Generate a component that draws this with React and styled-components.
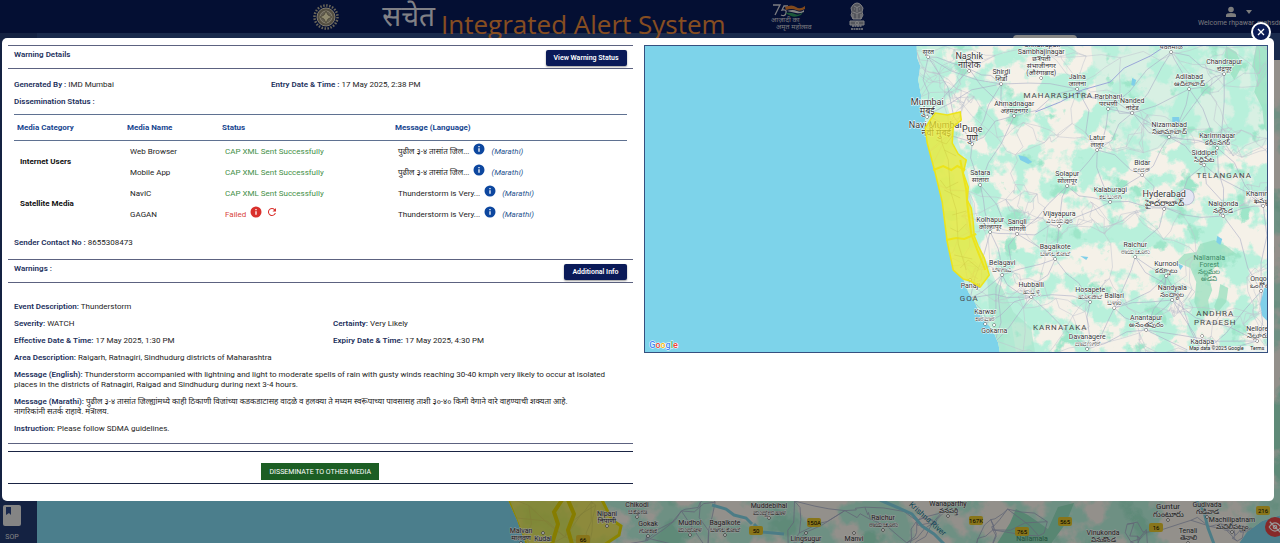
import React from 'react';
import styled, { createGlobalStyle } from 'styled-components';

const warning = {
    generatedBy: 'IMD Mumbai',
    entryTime: '17 May 2025, 2:38 PM',
    contact: '8655308473',
    event: 'Thunderstorm',
    severity: 'WATCH',
    certainty: 'Very Likely',
    effective: '17 May 2025, 1:30 PM',
    expiry: '17 May 2025, 4:30 PM',
    area: 'Raigarh, Ratnagiri, Sindhudurg districts of Maharashtra',
    english: 'Thunderstorm accompanied with lightning and light to moderate spells of rain with gusty winds reaching 30-40 kmph very likely to occur at isolated places in the districts of Ratnagiri, Raigad and Sindhudurg during next 3-4 hours.',
    marathi: 'पुढील ३-४ तासांत जिल्ह्यांमध्ये काही ठिकाणी विजांच्या कडकडाटासह वादळे व हलक्या ते मध्यम स्वरूपाच्या पावसासह ताशी ३०-४० किमी वेगाने वारे वाहण्याची शक्यता आहे.\nनागरिकांनी सतर्क राहावे. मंत्रालय.',
    instruction: 'Please follow SDMA guidelines.',
}

const mediaRows = [
    { category: 'Internet Users', name: 'Web Browser', sent: true, message: 'पुढील ३-४ तासांत जिल...' },
    { name: 'Mobile App', sent: true, message: 'पुढील ३-४ तासांत जिल...' },
    { category: 'Satellite Media', name: 'NavIC', sent: true, message: 'Thunderstorm is Very...' },
    { name: 'GAGAN', sent: false, message: 'Thunderstorm is Very...' },
]

// x, y, name, native name, size
const towns = [
    [928, 47, '', 'सूरत', 7], [969, 59, 'Nashik', 'नाशिक', 9], [1001, 74, 'Shirdi', 'शिर्डी', 7],
    [1077, 79, 'Jalna', 'जालना', 7], [1108, 99, 'Parbhani', 'परभणी', 7], [1132, 103, 'Nanded', 'नांदेड', 7],
    [1189, 79, 'Adilabad', 'ఆదిలాబాద్', 7], [1224, 64, 'Chandrapur', 'चंद्रपूर', 7], [1171, 42, '', 'यवतमाळ', 7],
    [927, 105, 'Mumbai', 'मुंबई', 9], [1014, 106, 'Ahmadnagar', 'अहमदनगर', 7], [972, 132, 'Pune', 'पुणे', 9],
    [1169, 127, 'Nizamabad', 'నిజామాబాద్', 7], [1217, 138, 'Karimnagar', 'కరీంనగర్', 7], [1097, 140, 'Latur', 'लातूर', 7],
    [1204, 155, 'Siddipet', 'సిద్దిపేట', 7], [1142, 165, 'Bidar', 'ಬೀದರ್', 7], [980, 175, 'Satara', 'सातारा', 7],
    [1067, 176, 'Solapur', 'सोलापूर', 7], [1110, 192, 'Kalaburagi', 'ಕಲಬುರಗಿ', 7], [1164, 197, 'Hyderabad', 'హైదరాబాద్', 9],
    [1263, 196, 'Khammam', 'ఖమ్మం', 7], [990, 222, 'Kolhapur', 'कोल्हापूर', 7], [1017, 224, 'Sangli', 'सांगली', 7],
    [1059, 216, 'Vijayapura', 'ವಿಜಯಪುರ', 7], [1055, 249, 'Bagalkote', 'ಬಾಗಲಕೋಟೆ', 7], [1223, 206, 'Nalgonda', 'నల్గొండ', 7],
    [1002, 265, 'Belagavi', 'ಬೆಳಗಾವಿ', 7], [1135, 247, 'Raichur', 'ರಾಯಚೂರು', 7], [1166, 266, 'Kurnool', 'కర్నూలు', 7],
    [1031, 287, 'Hubballi', 'ಹುಬ್ಬಳ್ಳಿ', 7], [1172, 290, 'Nandyala', 'నంద్యాల', 7], [1261, 281, 'Ongole', 'ఒంగోలు', 7],
    [1090, 292, 'Hosapete', 'ಹೊಸಪೇಟೆ', 7], [1114, 298, 'Ballari', 'ಬಳ್ಳಾರಿ', 7], [970, 288, 'Panaji', '', 7],
    [985, 314, 'Karwar', 'ಕಾರವಾರ', 7], [994, 333, 'Gokarna', '', 7], [1146, 320, 'Anantapur', 'అనంతపురం', 7],
    [1087, 339, 'Davanagere', 'ದಾವಣಗೆರೆ', 7], [1257, 331, 'Nellore', 'నెల్లూరు', 7], [1202, 344, 'Kadapa', '', 7],
]

const backTowns = [
    [637, 507, 'Chikodi', 'ಚಿಕ್ಕೋಡಿ', 7], [648, 526, 'Gokak', 'ಗೋಕಾಕ', 7], [690, 525, 'Mudhol', 'ಮುಧೋಳ', 7],
    [725, 525, 'Bagalkote', 'ಬಾಗಲಕೋಟೆ', 7], [769, 508, 'Muddebihal', 'ಮುದ್ದೇಬಿಹಾಳ', 7], [806, 541, 'Lingsugur', '', 7],
    [854, 541, 'Manvi', '', 7], [883, 520, 'Raichur', 'ರಾಯಚೂರು', 7], [948, 506, 'Wanaparthy', 'వనపర్తి', 7],
    [1103, 535, 'Vinukonda', 'వినుకొండ', 7], [1168, 509, 'Guntur', 'గుంటూరు', 8], [1207, 507, 'Gudivada', 'గుడివాడ', 7],
    [1188, 533, 'Tenali', 'తెనాలి', 7], [1232, 522, 'Machilipatnam', 'మచిలీపట్నం', 7], [607, 516, 'Nipani', 'निपाणी', 7],
    [521, 533, 'Malvan', 'मालवण', 7], [543, 541, 'Kudal', '', 7],
]

const states = [
    [1058, 98, 'MAHARASHTRA'], [1224, 178, 'TELANGANA'], [969, 301, 'GOA'],
    [1060, 330, 'KARNATAKA'], [1215, 316, 'ANDHRA'], [1215, 325, 'PRADESH'],
]

const shields = [
    [756, 531, '50'], [814, 523, '150A'], [976, 521, '167K'], [1022, 532, '765'],
    [1065, 522, '565'], [1156, 528, '16'], [1263, 511, '216'], [583, 540, '66'],
]

const seeded = (seed) => () => {
    seed = (seed * 16807) % 2147483647
    return seed / 2147483647
}

// joins every town to its closest neighbours with a slightly bent road
const makeRoads = (points, links, seed) => {
    const rand = seeded(seed)
    const bend = () => (rand() - 0.5) * 10
    const joined = new Set()
    return points.flatMap(([x, y]) =>
        points
            .filter((p) => p[0] !== x || p[1] !== y)
            .sort((a, b) => Math.hypot(a[0] - x, a[1] - y) - Math.hypot(b[0] - x, b[1] - y))
            .slice(0, links)
            .filter(([tx, ty]) => {
                const key = [x + y, tx + ty].sort().join()
                return !joined.has(key) && joined.add(key)
            })
            .map(([tx, ty]) => {
                const dx = (tx - x) / 3
                const dy = (ty - y) / 3
                return `M${x} ${y + 10}L${x + dx + bend()} ${y + 10 + dy + bend()}L${x + dx * 2 + bend()} ${y + 10 + dy * 2 + bend()}L${tx} ${ty + 10}`
            })
    ).join('')
}

const scatter = (x, y, width, height, count, seed) => {
    const rand = seeded(seed)
    return Array.from({ length: count }, () => [x + rand() * width, y + rand() * height])
}

const mainRoads = makeRoads(towns, 4, 77)
const minorRoads = makeRoads(scatter(900, 30, 380, 330, 150, 41), 4, 19)
const backRoads = makeRoads(scatter(500, 490, 790, 60, 45, 23), 3, 31)

const coast = 'M916 40L917 58L920 66L918 80L921 96L920 106L925 118L925 128L928 146L935 173L942 202L947 242L953 270L963 279L968 292L975 303L981 318L992 329L998 343L1001 360H1290V30H916Z'
const alertArea = 'M935 113L947 115L960 112L961 120L953 127L952 143L958 154L966 160L963 173L968 187L967 200L971 208L973 222L974 236L978 246L984 258L989 275L980 287L970 281L963 279L953 270L947 242L942 202L935 173L927 143L925 128L930 120Z'

const Terrain = ({ id, scale }) => (
    <defs>
        <filter id={`${id}-green`} x="0" y="0" width="1" height="1" colorInterpolationFilters="sRGB">
            <feTurbulence type="fractalNoise" baseFrequency={scale} numOctaves="5" seed="8" />
            <feColorMatrix values="0 0 0 0 0.72  0 0 0 0 0.94  0 0 0 0 0.86  9 0 0 0 -4.100" />
        </filter>
        <filter id={`${id}-forest`} x="0" y="0" width="1" height="1" colorInterpolationFilters="sRGB">
            <feTurbulence type="fractalNoise" baseFrequency={scale} numOctaves="5" seed="15" />
            <feColorMatrix values="0 0 0 0 0.62  0 0 0 0 0.9  0 0 0 0 0.79  0 10 0 0 -6.600" />
        </filter>
    </defs>
)

const TownLabel = ({ town: [x, y, name, native, size] }) => (
    <Town $size={size}>
        <circle cx={x} cy={native ? y + size + 3 : y - 8} r="1.3" />
        <text x={x} y={y}>{name}</text>
        <text x={x} y={y + size}>{native}</text>
    </Town>
)

const AlertMap = () => (
    <MapFrame>
        <MapSvg viewBox="644 46 624 306" preserveAspectRatio="xMidYMid slice" role="img" aria-label="Warning area map">
            <Terrain id="front" scale="0.04" />
            <clipPath id="front-land"><path d={coast} /></clipPath>
            <g clipPath="url(#front-land)">
                <rect x="900" y="40" width="380" height="320" fill="#f5f1e8" />
                <path d="M1090 40h190v100l-30 10-60-14-50 20-40-30z" fill="#c4f0e0" opacity="0.6" />
                <rect x="900" y="40" width="380" height="320" filter="url(#front-green)" />
                <rect x="900" y="40" width="380" height="320" filter="url(#front-forest)" />
                <path d="M915 40h26l4 60 22 70 14 80 28 60 8 50h-40l-60-150z" fill="#b8efdc" opacity="0.7" />
                <path d="M987 278l14 8 12 26 18 16 4 26h-36l-10-40z" fill="#a8e6cd" opacity="0.7" />
                <path d="M1176 262l8-8 12-2 4-8 14-4 12 6 10 8-14 4-8 10-6 8 4 14-4 10 2 14-10 2-6-14 2-20-6-14zM1220 284l8 4-2 14-10 12-2-8 4-10z" fill="#98dfbf" opacity="0.75" />
                <path d="M1256 46h14v90l-6-8-2-20-8-16 4-14-6-12z M1226 46l10 6 6 14-8 14-6-10-4-14z" fill="#98e2c2" opacity="0.8" />
                <path d={minorRoads} fill="none" stroke="#bec2ce" strokeWidth="0.5" />
                <path d={mainRoads} fill="none" stroke="#a9adc6" strokeWidth="0.6" />
                <path d="M1035 112L1060 102L1082 90L1110 82L1124 68L1150 56L1168 44" fill="none" stroke="#9aa6d8" strokeWidth="1" />
                <path d="M1018 155l8 2 6 5-4 2-8-4zM1172 117h7v5h-7zM1132 78l4 2-2 6-3-1zM1177 263l6 3-3 4zM1217 236l5 3-2 6-4-3zM1080 256l8 1-2 3zM1264 288l-4 16 2 12 8 8v-40z" fill="#7fcfe9" />
                <circle cx="1186" cy="197" r="8" fill="#e4e6f3" stroke="#a3a9c4" strokeWidth="0.7" />
            </g>
            {towns.map((town) => <TownLabel key={town[0]} town={town} />)}
            <Town $size={7}>
                <text x="1042" y="47">Chhatrapati</text>
                <text x="1041" y="54">Sambhajinagar</text>
                <text x="1041" y="61">छत्रपती</text>
                <text x="1041" y="68">संभाजीनगर</text>
                <text x="1041" y="75">(औरंगाबाद)</text>
                <circle cx="1041" cy="78" r="1.3" />
            </Town>
            <Town $size={9}>
                <text x="935" y="128">Navi Mumbai</text>
                <text x="936" y="136">नवी मुंबई</text>
            </Town>
            <path d={alertArea} fill="#efe92a" fillOpacity="0.72" stroke="#ece41a" strokeWidth="1.500" />
            <path d="M933 170l10-4 8 4 6-4 8 4M946 240l10-2 8 1 12-5M960 160l2 10 4 20 1 14 4 30 6 16 8 20" fill="none" stroke="#ece41a" strokeWidth="2" />
            <path d="M938 124l4 20 6 16 2 30 6 20 2 34 8 26M944 150l12 6M944 190l16 8M952 215l14-4M954 255l18 4M936 140l10 4 6-8M950 228l8 4 8-8M940 180l6 8 12-6M960 268l8-8 10 8" fill="none" stroke="#cfcc45" strokeWidth="0.500" />
            {states.map(([x, y, name]) => <StateName key={name} x={x} y={y}>{name}</StateName>)}
            <Forest>
                <text x="1209" y="260">Nallamala</text>
                <text x="1209" y="267">Forest</text>
                <text x="1209" y="274">నల్లమల</text>
                <text x="1209" y="281">అడవి</text>
            </Forest>
            <rect x="1187" y="346" width="81" height="6" fill="#f5f5f5" opacity="0.8" />
            <Credit x="1189" y="350">Map data ©2025 Google</Credit>
            <Credit x="1250" y="350">Terms</Credit>
            <GoogleMark x="649" y="348">
                <tspan fill="#4285f4">G</tspan><tspan fill="#ea4335">o</tspan><tspan fill="#fbbc04">o</tspan><tspan fill="#4285f4">g</tspan><tspan fill="#34a853">l</tspan><tspan fill="#ea4335">e</tspan>
            </GoogleMark>
        </MapSvg>
    </MapFrame>
)

const BackMap = () => (
    <MapSvg viewBox="37 60 1243 483" preserveAspectRatio="xMidYMax slice" aria-hidden="true">
        <Terrain id="back" scale="0.02" />
        <clipPath id="back-land"><path d="M490 440L508 500L517 520L526 545H1238L1247 532L1262 521L1290 512V60H490Z" /></clipPath>
        <g clipPath="url(#back-land)">
            <rect x="490" y="60" width="800" height="490" fill="#f5f1e8" />
            <rect x="490" y="60" width="800" height="490" filter="url(#back-green)" />
            <rect x="490" y="60" width="800" height="490" filter="url(#back-forest)" />
            <path d="M996 545l14-22 6-14 12 6 20 14 10-22 16-4-8 20-16 22z" fill="#93dfbe" />
            <path d={backRoads} fill="none" stroke="#a3a9c4" strokeWidth="0.8" />
            <path d="M712 505l14 4 8 6 12 3 6 6M754 524l8 8 22 2M880 500l14 6 18 8 10 12 12 8 12 12M1196 500l8 12 4 16 6 16" fill="none" stroke="#7fcfe0" strokeWidth="3" />
            <path d="M490 440L508 500L526 545H604L619 535L621 526L612 520L602 500V440Z" fill="#e8e13a" fillOpacity="0.75" stroke="#e8dc00" strokeWidth="3" />
            <path d="M562 500l-8 12 4 12-6 20M568 500l6 14-6 16 4 14" fill="none" stroke="#e0d000" strokeWidth="4" />
        </g>
        {backTowns.map((town) => <TownLabel key={town[0]} town={town} />)}
        {shields.map(([x, y, name]) => (
            <Shield key={name}>
                <rect x={x - 7} y={y - 5} width="14" height="9" rx="2" />
                <text x={x} y={y + 2}>{name}</text>
            </Shield>
        ))}
        <RiverName x="922" y="527" transform="rotate(42 932 529)">Krishna River</RiverName>
        <Forest><text x="1032" y="541">Nallamala</text></Forest>
    </MapSvg>
)

const InfoIcon = () => (
    <svg width="12" height="12" viewBox="0 0 24 24" fill="currentColor" aria-hidden="true">
        <path d="M12 1a11 11 0 1 0 0 22 11 11 0 0 0 0-22zm1.300 16.500h-2.600v-7h2.600zm0-9h-2.600V6h2.600z" />
    </svg>
)

const RetryIcon = () => (
    <svg width="12" height="12" viewBox="0 0 24 24" fill="currentColor" aria-hidden="true">
        <path d="M17.650 6.350A8 8 0 1 0 19.730 14h-2.080A6 6 0 1 1 12 6c1.660 0 3.140.690 4.220 1.780L13 11h7V4z" />
    </svg>
)

const WheelEmblem = () => (
    <svg width="26" height="28" viewBox="0 0 26 28" aria-hidden="true">
        <circle cx="13" cy="14" r="11.500" fill="none" stroke="#b5ad96" strokeWidth="2.500" strokeDasharray="1.500 1.500" />
        <circle cx="13" cy="14" r="9" fill="#8b826d" stroke="#d9d0b8" strokeWidth="1" />
        <circle cx="13" cy="14" r="6" fill="#a79f8a" stroke="#e0d8c0" />
        <path d="M13 8l2 4 4 2-4 2-2 4-2-4-4-2 4-2z" fill="#f0e6ba" stroke="#6d654f" strokeWidth="0.700" />
    </svg>
)

const LionEmblem = () => (
    <svg width="16" height="29" viewBox="0 0 16 29" fill="none" stroke="#d8d8dc" aria-hidden="true">
        <path d="M4 3q4-4 8 0l2 3-1 4 1 3-2 4H4l-2-4 1-3-1-4z" fill="#8d909c" />
        <path d="M5 4q3 3 6 0M5 7h1M10 7h1M8 5v5M4 10q4 3 8 0M4 12v5M8 12v5M12 12v5" />
        <path d="M1 19h14v4H1z" fill="#8d909c" />
        <circle cx="8" cy="21" r="1.500" />
        <path d="M3 24h10M2 27h12" strokeWidth="1.500" strokeDasharray="2 0.500" />
    </svg>
)

const AzadiLogo = () => (
    <svg width="42" height="28" viewBox="0 0 42 28" aria-hidden="true">
        <path d="M3 2h7L5 12M18 3h-4l-2 4q5-1 4 3t-5 2" fill="none" stroke="#d0d0d8" strokeWidth="1.300" />
        <path d="M15 4q7-3 11 0t9-1v3q-5 3-9 1t-10 0z" fill="#d87a30" />
        <path d="M17 8q6-2 10 0t7-1v2q-4 2-8 1z" fill="#e0e0e0" />
        <path d="M15 10q6-1 10 1t8-2l-2 3q-6 3-10 1z" fill="#2d9360" />
        <LogoText x="1" y="19">आज़ादी का</LogoText>
        <LogoText x="6" y="26">अमृत महोत्सव</LogoText>
    </svg>
)

const Field = ({ label, children }) => (
    <Text><Label>{label}</Label> {children}</Text>
)

const MediaTable = () => (
    <Table>
        <thead>
            <tr>
                <Th $width="110px">Media Category</Th>
                <Th $width="95px">Media Name</Th>
                <Th $width="173px">Status</Th>
                <Th>Message (Language)</Th>
            </tr>
        </thead>
        <tbody>
            {mediaRows.map((row) => (
                <tr key={row.name}>
                    {row.category && <Category rowSpan="2" scope="rowgroup">{row.category}</Category>}
                    <Td>{row.name}</Td>
                    <Td>
                        <Cell $color={row.sent ? '#3f8f47' : '#d9453d'}>
                            {row.sent ? 'CAP XML Sent Successfully' : 'Failed'}
                            {!row.sent && (
                                <>
                                    <IconButton aria-label="Failure reason"><InfoIcon /></IconButton>
                                    <IconButton aria-label="Retry"><RetryIcon /></IconButton>
                                </>
                            )}
                        </Cell>
                    </Td>
                    <Td>
                        <Cell>
                            {row.message}
                            <IconButton $color="#0d479f" aria-label="Show full message"><InfoIcon /></IconButton>
                            <Language>(Marathi)</Language>
                        </Cell>
                    </Td>
                </tr>
            ))}
        </tbody>
    </Table>
)

const App = () => {
    return (
        <Page>
            <GlobalStyle />
            <Header>
                <Brand>
                    <WheelEmblem />
                    <Sachet>सचेत</Sachet>
                    <Title>Integrated Alert System</Title>
                    <AzadiLogo />
                    <LionEmblem />
                </Brand>
                <Account>
                    <AccountIcons>
                        <svg width="12" height="12" viewBox="0 0 12 12" fill="#d0d0d0" aria-hidden="true">
                            <circle cx="6" cy="3.500" r="2.800" />
                            <path d="M1 11V9q0-2 5-2t5 2v2z" />
                        </svg>
                        <svg width="6" height="4" viewBox="0 0 6 4" fill="#d0d0d0" aria-hidden="true"><path d="M0 0h6L3 4z" /></svg>
                    </AccountIcons>
                    Welcome rhpawar_mahsdma
                </Account>
            </Header>
            <Body>
                <Sidebar>
                    <SopLink href="#sop">
                        <svg width="18" height="21" viewBox="0 0 18 21" aria-hidden="true">
                            <rect width="18" height="21" rx="2" fill="#dcdcdc" />
                            <path d="M3 2h5v8l-2-2-3 2z" fill="#2b4480" />
                        </svg>
                        SOP
                    </SopLink>
                </Sidebar>
                <Main>
                    <Toolbar><SearchTab /></Toolbar>
                    <BackMapArea><BackMap /></BackMapArea>
                </Main>
            </Body>
            <HideButton aria-label="Hide layer">
                <svg width="14" height="14" viewBox="0 0 24 24" fill="none" stroke="#ffffff" strokeWidth="2" aria-hidden="true">
                    <path d="M2 12q10-14 20 0-10 14-20 0zM3 3l18 18" /><circle cx="12" cy="12" r="3" />
                </svg>
            </HideButton>
            <Overlay>
                <Modal role="dialog" aria-label="Warning Details">
                    <CloseButton aria-label="Close">
                        <svg width="8" height="8" viewBox="0 0 8 8" stroke="#ffffff" strokeWidth="1.300" aria-hidden="true"><path d="M1 1l6 6M7 1L1 7" /></svg>
                    </CloseButton>
                    <Details>
                        <SectionBar>
                            <Heading>Warning Details</Heading>
                            <ActionButton>View Warning Status</ActionButton>
                        </SectionBar>
                        <Summary>
                            <Split $first="257px">
                                <Field label="Generated By :">{warning.generatedBy}</Field>
                                <Field label="Entry Date &amp; Time :">{warning.entryTime}</Field>
                            </Split>
                            <Field label="Dissemination Status :" />
                            <MediaTable />
                            <Field label="Sender Contact No :">{warning.contact}</Field>
                        </Summary>
                        <SectionBar>
                            <Heading>Warnings :</Heading>
                            <ActionButton>Additional Info</ActionButton>
                        </SectionBar>
                        <Fields>
                            <Field label="Event Description:">{warning.event}</Field>
                            <Split $first="319px">
                                <Field label="Severity:">{warning.severity}</Field>
                                <Field label="Certainty:">{warning.certainty}</Field>
                            </Split>
                            <Split $first="319px">
                                <Field label="Effective Date &amp; Time:">{warning.effective}</Field>
                                <Field label="Expiry Date &amp; Time:">{warning.expiry}</Field>
                            </Split>
                            <Field label="Area Description:">{warning.area}</Field>
                            <Field label="Message (English):">{warning.english}</Field>
                            <Field label="Message (Marathi):">{warning.marathi}</Field>
                            <Field label="Instruction:">{warning.instruction}</Field>
                        </Fields>
                        <Footer>
                            <SendButton>DISSEMINATE TO OTHER MEDIA</SendButton>
                        </Footer>
                    </Details>
                    <AlertMap />
                </Modal>
            </Overlay>
        </Page>
    )
}

const GlobalStyle = createGlobalStyle`
  * {
    box-sizing: border-box;
  }
  body {
    margin: 0;
    overflow: hidden;
    font-family: Roboto, "Open Sans", "Noto Sans", sans-serif;
    font-size: 8px;
    line-height: 10px;
    color: #1c1c1c;
  }
  button {
    border: 0;
    padding: 0;
    font: inherit;
    cursor: pointer;
  }
`

const Page = styled.div`
  min-height: 100vh;
  display: flex;
  flex-direction: column;
`

const Header = styled.header`
  height: 33px;
  flex-shrink: 0;
  display: flex;
  align-items: center;
  background: #071955;
`

const Brand = styled.div`
  flex: 1;
  display: flex;
  align-items: center;
  justify-content: center;
`

const Sachet = styled.span`
  margin-left: 43px;
  font-size: 28px;
  line-height: 32px;
  color: #d8d8e0;
`

const Title = styled.h1`
  position: relative;
  z-index: 1;
  margin: 14px 44px 0 6px;
  font-family: "Open Sans", sans-serif;
  font-size: 26px;
  line-height: 32px;
  font-weight: 400;
  color: #e08238;

  & + svg {
    margin-right: 37px;
  }
`

const LogoText = styled.text`
  font-size: 7px;
  fill: #c8c8d0;
`

const Account = styled.div`
  width: 102px;
  padding-left: 20px;
  font-size: 7px;
  white-space: nowrap;
  color: #c8c8d0;
`

const AccountIcons = styled.div`
  display: flex;
  align-items: center;
  gap: 9px;
  padding-left: 27px;
`

const Body = styled.div`
  flex: 1;
  display: flex;
`

const Sidebar = styled.nav`
  width: 37px;
  display: flex;
  flex-direction: column;
  justify-content: flex-end;
  background: #22396f;
`

const SopLink = styled.a`
  display: flex;
  flex-direction: column;
  gap: 6px;
  width: 24px;
  padding-bottom: 1px;
  align-items: center;
  font-size: 7px;
  text-decoration: none;
  color: #dcdcdc;
`

const Main = styled.main`
  flex: 1;
  display: flex;
  flex-direction: column;
`

const Toolbar = styled.div`
  height: 27px;
  display: flex;
  justify-content: flex-end;
  padding: 2px 203px 0 0;
  background: #2b467f;
`

const SearchTab = styled.div`
  width: 64px;
  border-radius: 4px;
  background: #e0e0e0;
`

const BackMapArea = styled.div`
  flex: 1;
  display: flex;
  height: 0;
`

const MapSvg = styled.svg`
  display: block;
  width: 100%;
  height: 100%;
  background: #7dd3ea;
  font-family: Roboto, "Noto Sans", sans-serif;
`

const Town = styled.g`
  font-size: ${(props) => props.$size}px;
  text-anchor: middle;
  fill: #333333;
  paint-order: stroke;
  stroke: #ffffff;
  stroke-width: 1px;

  circle {
    fill: #ffffff;
    stroke: #555555;
  }
`

const StateName = styled.text`
  font-size: 8px;
  letter-spacing: 1px;
  text-anchor: middle;
  fill: #4a4a4a;
`

const Forest = styled.g`
  font-size: 7px;
  text-anchor: middle;
  fill: #3d8a66;
`

const Credit = styled.text`
  font-size: 5px;
  fill: #222222;
`

const GoogleMark = styled.text`
  font-size: 9px;
  font-weight: 500;
  paint-order: stroke;
  stroke: #ffffff;
  stroke-width: 1px;
`

const Shield = styled.g`
  font-size: 6px;
  text-anchor: middle;

  rect {
    fill: #e3c42c;
  }
`

const RiverName = styled.text`
  font-size: 8px;
  text-anchor: middle;
  fill: #1f7791;
`

const HideButton = styled.button`
  position: fixed;
  right: -5px;
  bottom: 6px;
  width: 20px;
  height: 20px;
  display: flex;
  align-items: center;
  justify-content: center;
  border-radius: 50%;
  background: #e04545;
`

const Overlay = styled.div`
  position: fixed;
  inset: 0;
  z-index: 2;
  padding: 38px 6px 0 2px;
  background: rgba(0, 0, 0, 0.4);
`

const Modal = styled.section`
  position: relative;
  display: grid;
  grid-template-columns: 1fr 1fr;
  align-items: start;
  gap: 11px;
  padding: 7px 6px 17px 6px;
  border-radius: 5px;
  background: #ffffff;
`

const CloseButton = styled.button`
  position: absolute;
  top: -16px;
  right: 3px;
  width: 20px;
  height: 20px;
  display: flex;
  align-items: center;
  justify-content: center;
  border: 2px solid #ffffff;
  border-radius: 50%;
  background: #0a1a55;
`

const Details = styled.div`
  min-width: 0;
`

const SectionBar = styled.div`
  height: 24px;
  display: flex;
  align-items: center;
  justify-content: space-between;
  padding: 0 6px;
  border-top: 1px solid #5c6280;
  border-bottom: 1px solid #5c6280;
`

const Heading = styled.h2`
  margin: 0 0 4px;
  font-size: 8px;
  line-height: 10px;
  font-weight: 600;
  color: #22305c;
`

const ActionButton = styled.button`
  height: 16px;
  margin-top: 1px;
  padding: 0 8px;
  border-radius: 2px;
  font-size: 7px;
  font-weight: 600;
  color: #ffffff;
  background: #0a1a58;
  box-shadow: 0 1px 2px rgba(0, 0, 0, 0.4);
`

const Summary = styled.div`
  display: flex;
  flex-direction: column;
  gap: 7px;
  padding: 11px 6px;
`

const Split = styled.div`
  display: grid;
  grid-template-columns: ${(props) => props.$first} 1fr;
`

const Text = styled.p`
  margin: 0;
  white-space: pre-line;
`

const Label = styled.span`
  font-weight: 600;
  color: #22305c;
`

const Table = styled.table`
  width: 100%;
  margin-bottom: 6px;
  border-collapse: separate;
  border-spacing: 0;
  table-layout: fixed;
`

const Th = styled.th`
  width: ${(props) => props.$width || 'auto'};
  height: 27px;
  padding: 0 3px;
  border-top: 1px solid #5f7191;
  border-bottom: 1px solid #5f7191;
  text-align: left;
  font-weight: 700;
  color: #17468f;
`

const Td = styled.td`
  height: 21px;
  padding: 0 6px;
  white-space: nowrap;
`

const Category = styled.th`
  padding: 0 6px;
  text-align: left;
  font-weight: 700;
  color: #111111;
`

const Cell = styled.div`
  display: flex;
  align-items: center;
  gap: 4px;
  color: ${(props) => props.$color || '#1c1c1c'};
`

const IconButton = styled.button`
  display: flex;
  padding-bottom: 5px;
  color: ${(props) => props.$color || '#d9302c'};
  background: none;
`

const Language = styled.em`
  padding-left: 2px;
  color: #2a5590;
`

const Fields = styled.div`
  display: flex;
  flex-direction: column;
  gap: 7px;
  padding: 19px 6px 9px;
  border-bottom: 1px solid #5c6280;
`

const Footer = styled.div`
  display: flex;
  justify-content: center;
  margin-top: 7px;
  padding: 11px 0 3px;
  border-top: 1px solid #1a2444;
  border-bottom: 1px solid #1a2444;
`

const SendButton = styled.button`
  height: 17px;
  padding: 0 8px;
  font-size: 7px;
  color: #ffffff;
  background: #1c5e24;
`

const MapFrame = styled.div`
  height: 308px;
  border: 1px solid #35507f;
`

export default App
